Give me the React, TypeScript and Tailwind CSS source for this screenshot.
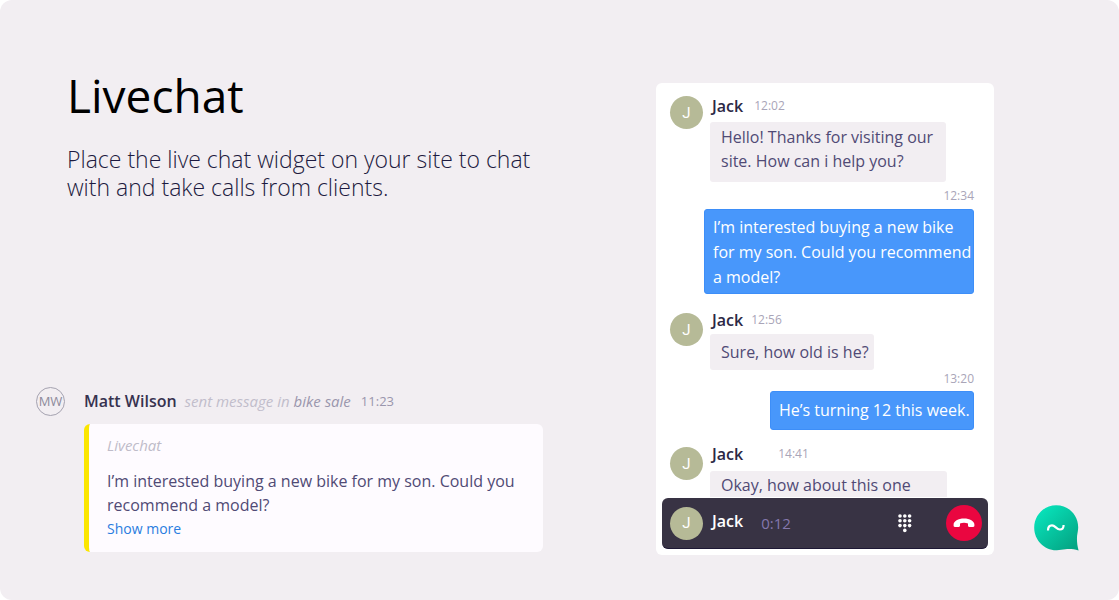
import type { ReactNode } from "react";

function Avatar({ className = "" }: { className?: string }) {
  return (
    <span
      className={`flex size-[33px] shrink-0 items-center justify-center rounded-full bg-[#b6ba97] font-['Roboto','Open_Sans',sans-serif] text-[15px] leading-5 text-white ${className}`}
    >
      J
    </span>
  );
}

function Incoming({
  time,
  timeGap = "ml-2",
  className = "",
  avatarClass = "",
  bubbleClass,
  children,
}: {
  time: string;
  timeGap?: string;
  className?: string;
  avatarClass?: string;
  bubbleClass: string;
  children: ReactNode;
}) {
  return (
    <li className={`flex items-start gap-[7px] ${className}`}>
      <Avatar className={avatarClass} />
      <div className="flex flex-col items-start">
        <div className="flex h-5 items-center pl-[2px]">
          <span className="text-base font-semibold leading-5 text-[#2c2845]">Jack</span>
          <time className={`text-xs leading-5 text-[#a9a5b8] ${timeGap}`}>{time}</time>
        </div>
        <p className={`bg-[#f2eef2] text-base text-[#504a75] ${bubbleClass}`}>{children}</p>
      </div>
    </li>
  );
}

function Outgoing({
  time,
  className = "",
  bubbleClass,
  children,
}: {
  time: string;
  className?: string;
  bubbleClass: string;
  children: ReactNode;
}) {
  return (
    <li className={`flex flex-col items-end ${className}`}>
      <time className="text-xs leading-[18px] text-[#a9a5b8]">{time}</time>
      <p
        className={`rounded-[3px] border border-[#3d8ef8] bg-[#4897fb] text-base leading-[25px] text-white ${bubbleClass}`}
      >
        {children}
      </p>
    </li>
  );
}

function DialpadIcon() {
  const columns = [2, 6.8, 11.6];
  const rows = [2, 6.8, 11.6];
  return (
    <svg viewBox="0 0 14 19" className="h-[19px] w-[14px]" fill="#fff" aria-hidden="true">
      {rows.map((y) => columns.map((x) => <circle key={`${x}-${y}`} cx={x} cy={y} r="1.8" />))}
      <circle cx="6.8" cy="16.4" r="1.8" />
    </svg>
  );
}

function HangUpIcon() {
  return (
    <svg viewBox="0 0 22 10" className="h-[10px] w-[22px]" fill="#fff" aria-hidden="true">
      <path d="M11 .6C5.200.6.6 3.300.6 6.600v1.200c0 .7.5 1.100 1.200 1.100H5.800c.7 0 1.200-.5 1.200-1.200V5.600C8.200 5 9.600 4.800 11 4.800s2.800.2 4 .8v2.100c0 .7.5 1.200 1.200 1.200h4c.7 0 1.200-.4 1.200-1.100V6.600C21.400 3.300 16.800.6 11 .6Z" />
    </svg>
  );
}

function LauncherIcon() {
  return (
    <svg viewBox="0 0 45 46" className="h-[46px] w-[45px]" aria-hidden="true">
      <defs>
        <linearGradient id="launcher" x1="5" y1="5" x2="40" y2="42" gradientUnits="userSpaceOnUse">
          <stop offset="0" stopColor="#08e3bb" />
          <stop offset="1" stopColor="#04a584" />
        </linearGradient>
      </defs>
      <path
        d="M22.200.2C34.500.2 44.200 10 44.200 22.200c0 2.800-.7 5.600-1.100 8.600-.4 4.600.1 9.500 1.500 14.700-4.800-1.300-8.900-1.700-13.200-1.200-3 .4-6 1-9.200.9C10 45.200.2 34.900.2 22.700.2 10.200 10 .2 22.200.2Z"
        fill="url(#launcher)"
      />
      <path
        d="M14 25.500c0-3.300 1.700-5.200 4-5.200 3.300 0 4.400 4.200 7.900 4.200 2.400 0 3.700-1.500 3.700-4.600"
        fill="none"
        stroke="#fff"
        strokeWidth="2.200"
      />
    </svg>
  );
}

export default function App() {
  return (
    <main className="flex min-h-screen items-stretch rounded-xl bg-[#f2eef2] pl-9 pr-10 font-['Open_Sans','Noto_Sans',sans-serif]">
      <section className="flex min-w-0 flex-1 flex-col justify-between pb-12 pr-[113px] pt-[65px]">
        <header className="pl-[31px]">
          <h1 className="text-[46px] leading-[60px] text-black">Livechat</h1>
          <p className="mt-5 text-[23px] font-light leading-7 text-[#1d1a40]">
            Place the live chat widget on your site to chat with and take calls from clients.
          </p>
        </header>

        <article>
          <div className="flex items-center">
            <span className="flex size-[29px] shrink-0 items-center justify-center rounded-full border border-[#a5a2b0] text-[13px] text-[#8d8a9b]">
              MW
            </span>
            <div className="ml-[19px] flex items-center whitespace-nowrap pb-[2px] leading-6">
              <span className="text-base font-semibold text-[#37324f]">Matt Wilson</span>
              <span className="ml-2 text-[15px] italic text-[#c1bdcb]">
                sent message in <span className="text-[#9a96ad]">bike sale</span>
              </span>
              <time className="ml-[10px] text-[13px] text-[#9a96ad]">11:23</time>
            </div>
          </div>
          <div className="ml-12 mt-2 rounded-md border-l-[5px] border-[#fbe600] bg-[#fefbff] pb-[11px] pl-[18px] pr-6 pt-[9px]">
            <p className="text-[15px] italic leading-6 text-[#bfbcc9]">Livechat</p>
            <p className="mt-3 text-base leading-6 text-[#504a75]">
              I’m interested buying a new bike for my son. Could you recommend a model?
            </p>
            <a href="#more" className="block text-sm leading-6 text-[#2a7de0]">
              Show more
            </a>
          </div>
        </article>
      </section>

      <section
        aria-label="Live chat"
        className="mb-[45px] mt-[83px] flex w-[338px] shrink-0 flex-col rounded-md bg-white px-[6px] pb-[6px]"
      >
        <ol className="flex flex-1 flex-col pl-2 pr-[14px] pt-[13px]">
          <Incoming
            time="12:02"
            timeGap="ml-[11px]"
            bubbleClass="mt-[6px] w-[236px] rounded-[3px] pb-[9px] pl-[11px] pr-2 pt-[3px] leading-6"
          >
            Hello! Thanks for visiting our site. How can i help you?
          </Incoming>
          <Outgoing
            time="12:34"
            className="mt-[5px]"
            bubbleClass="mt-1 w-[270px] whitespace-nowrap pb-[3px] pl-2 pt-[5px]"
          >
            I’m interested buying a new bike
            <br />
            for my son. Could you recommend
            <br />a model?
          </Outgoing>
          <Incoming
            time="12:56"
            className="mt-4"
            avatarClass="mt-[3px]"
            bubbleClass="mt-1 w-[164px] whitespace-nowrap rounded-[3px] py-[6px] pl-[11px] leading-6"
          >
            Sure, how old is he?
          </Incoming>
          <Outgoing time="13:20" bubbleClass="mt-[3px] w-[204px] whitespace-nowrap py-[6px] pl-2">
            He’s turning 12 this week.
          </Outgoing>
          <Incoming
            time="14:41"
            timeGap="ml-[35px]"
            className="mt-[14px]"
            avatarClass="mt-[3px]"
            bubbleClass="mt-[7px] w-[237px] rounded-t-[3px] pl-[11px] pt-[2px] leading-6"
          >
            Okay, how about this one
          </Incoming>
        </ol>
        <div className="flex h-[51px] shrink-0 items-center rounded-md border-b border-[#1d1835] bg-[#383344] pl-2 pr-[6px]">
          <Avatar />
          <span className="ml-[9px] pb-1 text-base font-semibold text-white">Jack</span>
          <time className="ml-[18px] text-[15px] text-[#8478ad]">0:12</time>
          <button type="button" aria-label="Dialpad" className="ml-auto">
            <DialpadIcon />
          </button>
          <button
            type="button"
            aria-label="End call"
            className="ml-[34px] flex size-9 items-center justify-center rounded-full bg-[#ea0640]"
          >
            <HangUpIcon />
          </button>
        </div>
      </section>

      <button type="button" aria-label="Open chat" className="mb-[49px] ml-10 shrink-0 self-end">
        <LauncherIcon />
      </button>
    </main>
  );
}
